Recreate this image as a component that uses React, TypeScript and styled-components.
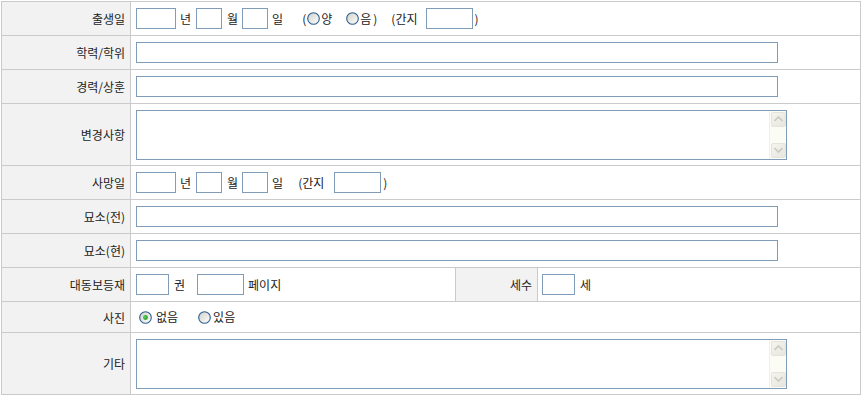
import { FC, ReactNode, useId } from "react";
import styled, { createGlobalStyle } from "styled-components";

const GlobalStyle = createGlobalStyle`
html, body {
    margin: 0;
    padding: 0;
    background: #fff;
}
body {
    font-family: "Noto Sans CJK KR", "Noto Sans", sans-serif;
    font-size: 12px;
    color: #222;
}
`;

type RadioType = {
    checked?: boolean;
    ml?: number;
}

// XP 스타일 라디오 버튼
const Radio: FC<RadioType> = ({ checked, ml = 0 }) => {
    const id = useId().replace(/:/g, "");
    return (
        <RadioBox style={{ marginLeft: ml }} viewBox="0 0 13 13" width="13" height="13">
            <defs>
                <linearGradient id={`bg${id}`} x1="0" y1="0" x2="1" y2="1">
                    <stop offset="0" stopColor="#d2d0c8" />
                    <stop offset="1" stopColor="#ffffff" />
                </linearGradient>
                <radialGradient id={`dot${id}`} cx="0.4" cy="0.4" r="0.6">
                    <stop offset="0" stopColor="#5fd35f" />
                    <stop offset="1" stopColor="#1f9a1f" />
                </radialGradient>
            </defs>
            <circle cx="6.5" cy="6.5" r="5.8" fill={`url(#bg${id})`} stroke="#2b5f8e" strokeWidth="1.1" />
            {checked && <circle cx="6.5" cy="6.5" r="2.4" fill={`url(#dot${id})`} />}
        </RadioBox>
    );
};

// 날짜 입력 (년/월/일)
const DateFields: FC = () => (
    <>
        <TextBox $w={40} />
        <Word $ml={4}>년</Word>
        <TextBox $w={26} $ml={5} />
        <Word $ml={5}>월</Word>
        <TextBox $w={26} $ml={4} />
        <Word $ml={4}>일</Word>
    </>
);

// 텍스트 영역 + 스크롤바
const MemoBox: FC = () => (
    <MemoFrame>
        <Memo />
        <ScrollBar>
            <ScrollButton>
                <svg width="9" height="6" viewBox="0 0 9 6"><path d="M0.5 5 L4.5 1 L8.5 5" fill="none" stroke="#cbcac2" strokeWidth="1.6" /></svg>
            </ScrollButton>
            <ScrollButton>
                <svg width="9" height="6" viewBox="0 0 9 6"><path d="M0.5 1 L4.5 5 L8.5 1" fill="none" stroke="#cbcac2" strokeWidth="1.6" /></svg>
            </ScrollButton>
        </ScrollBar>
    </MemoFrame>
);

const Row: FC<{ label: string; children: ReactNode }> = ({ label, children }) => (
    <>
        <LabelCell>{label}</LabelCell>
        <ValueCell $span={3}>{children}</ValueCell>
    </>
);

export default function App() {
    return (
        <>
            <GlobalStyle />
            <Page>
                <FormGrid>
                    <Row label="출생일">
                        <DateFields />
                        <Word $ml={19}>(</Word>
                        <Radio ml={1} />
                        <Word $ml={1}>양</Word>
                        <Radio ml={14} />
                        <Word $ml={1}>음</Word>
                        <Word $ml={2}>)</Word>
                        <Word $ml={14}>(간지</Word>
                        <TextBox $w={47} $ml={8} />
                        <Word $ml={2}>)</Word>
                    </Row>
                    <Row label="학력/학위">
                        <TextBox $w={642} />
                    </Row>
                    <Row label="경력/상훈">
                        <TextBox $w={642} />
                    </Row>
                    <Row label="변경사항">
                        <MemoBox />
                    </Row>
                    <Row label="사망일">
                        <DateFields />
                        <Word $ml={15}>(간지</Word>
                        <TextBox $w={47} $ml={10} />
                        <Word $ml={2}>)</Word>
                    </Row>
                    <Row label="묘소(전)">
                        <TextBox $w={642} />
                    </Row>
                    <Row label="묘소(현)">
                        <TextBox $w={642} />
                    </Row>

                    <LabelCell>대동보등재</LabelCell>
                    <ValueCell $span={1}>
                        <TextBox $w={33} />
                        <Word $ml={5}>권</Word>
                        <TextBox $w={47} $ml={12} />
                        <Word $ml={4}>페이지</Word>
                    </ValueCell>
                    <LabelCell>세수</LabelCell>
                    <ValueCell $span={1} $pl={4}>
                        <TextBox $w={33} />
                        <Word $ml={5}>세</Word>
                    </ValueCell>

                    <Row label="사진">
                        <Radio checked ml={3} />
                        <Word $ml={4}>없음</Word>
                        <Radio ml={20} />
                        <Word $ml={2}>있음</Word>
                    </Row>
                    <Row label="기타">
                        <MemoBox />
                    </Row>
                </FormGrid>
            </Page>
        </>
    );
}

const Page = styled.div`
padding: 1px 0 0 1px;
`;

const FormGrid = styled.div`
display: grid;
box-sizing: border-box;
width: 860px;
grid-template-columns: 128px 324px 81px 322px;
grid-template-rows: 33px 33px 33px 61px 33px 33px 33px 33px 30px 61px;
gap: 1px;
padding: 1px;
background: #cacaca;
`;

const LabelCell = styled.div`
display: flex;
align-items: center;
justify-content: flex-end;
padding-right: 5px;
background: #f2f2f2;
white-space: nowrap;
`;

const ValueCell = styled.div<{ $span: number; $pl?: number }>`
grid-column: span ${({ $span }) => $span};
display: flex;
align-items: center;
padding-left: ${({ $pl }) => $pl ?? 5}px;
background: #fff;
white-space: nowrap;
`;

const Word = styled.span<{ $ml?: number }>`
margin-left: ${({ $ml }) => $ml ?? 0}px;
line-height: 1;
`;

const TextBox = styled.input.attrs({ type: "text" })<{ $w: number; $ml?: number }>`
box-sizing: border-box;
width: ${({ $w }) => $w}px;
height: 21px;
margin: 0 0 0 ${({ $ml }) => $ml ?? 0}px;
padding: 0 3px;
border: 1px solid #7f9db9;
background: #fff;
font: inherit;
outline: none;
`;

const RadioBox = styled.svg`
display: block;
flex: none;
`;

const MemoFrame = styled.div`
box-sizing: border-box;
display: flex;
width: 651px;
height: 50px;
border: 1px solid #7f9db9;
background: #fff;
`;

const Memo = styled.textarea`
flex: 1;
border: none;
margin: 0;
padding: 2px;
resize: none;
outline: none;
font: inherit;
`;

const ScrollBar = styled.div`
display: flex;
flex-direction: column;
justify-content: space-between;
width: 17px;
padding: 1px 0 1px 1px;
box-sizing: border-box;
background: #fcfcf6;
border-left: 1px solid #f0efe8;
`;

const ScrollButton = styled.div`
display: flex;
align-items: center;
justify-content: center;
width: 15px;
height: 15px;
box-sizing: border-box;
border: 1px solid #e4e3dc;
border-radius: 2px;
background: linear-gradient(135deg, #f5f4ee, #e6e5de);
`;
